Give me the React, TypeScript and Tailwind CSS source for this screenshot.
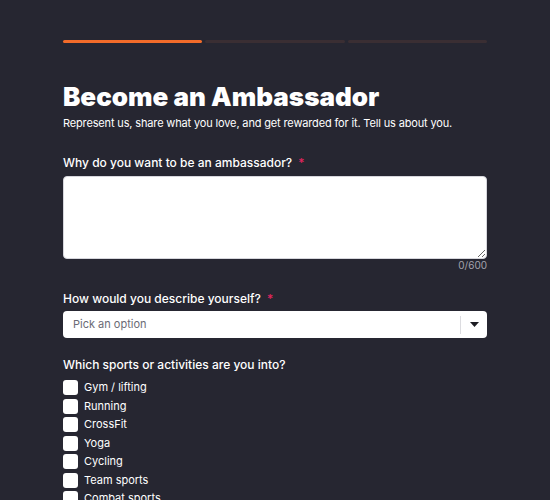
import React from "react";

const sports = [
  "Gym / lifting",
  "Running",
  "CrossFit",
  "Yoga",
  "Cycling",
  "Team sports",
  "Combat sports",
  "Swimming",
];

function Req() {
  return <span className="ml-[6px] text-[#e0245e] text-[12px]">*</span>;
}

export default function App() {
  return (
    <div className="min-h-screen bg-[#262631] font-['Inter',sans-serif] text-white">
      <div className="mx-auto w-[424px] pt-[40px] pb-10">
        <div className="flex gap-[3px] h-[3px]">
          <div className="flex-1 rounded-full bg-[#f26b2a]" />
          <div className="flex-1 rounded-full bg-[#3a2e33]" />
          <div className="flex-1 rounded-full bg-[#3a2e33]" />
        </div>

        <h1 className="mt-[38px] text-[26px] leading-[32px] font-black">
          Become an Ambassador
        </h1>
        <p className="mt-[2px] text-[11px] leading-[16px] tracking-[-0.15px] text-white">
          Represent us, share what you love, and get rewarded for it. Tell us about you.
        </p>

        <label className="mt-[24px] block text-[12px] leading-[16px] font-medium">
          Why do you want to be an ambassador?
          <Req />
        </label>
        <textarea
          className="mt-[5px] block h-[83px] w-full resize-y rounded-[4px] border border-[#d6d6dc] bg-white p-2 text-[12px] text-black outline-none"
        />
        <div className="text-right text-[10px] leading-[12px] text-[#a3a3ad]">0/600</div>

        <label className="mt-[20px] block text-[12px] leading-[16px] font-medium">
          How would you describe yourself?
          <Req />
        </label>
        <div className="mt-[4px] flex h-[27px] items-center rounded-[4px] bg-white">
          <span className="flex-1 pl-[10px] text-[11px] text-[#6b6b75]">Pick an option</span>
          <div className="h-[18px] w-px bg-[#dcdce0]" />
          <div className="flex w-[26px] items-center justify-center">
            <svg width="9" height="5" viewBox="0 0 9 5">
              <path d="M0 0 L9 0 L4.5 5 Z" fill="#1c1c22" />
            </svg>
          </div>
        </div>

        <label className="mt-[19px] block text-[12px] leading-[16px] font-medium">
          Which sports or activities are you into?
        </label>
        <div className="mt-[7px] flex flex-col gap-[3.5px]">
          {sports.map((s) => (
            <div key={s} className="flex h-[15px] items-center gap-[6px]">
              <div className="h-[15px] w-[15px] rounded-[3px] bg-white" />
              <span className="text-[11px] leading-[15px]">{s}</span>
            </div>
          ))}
        </div>
      </div>
    </div>
  );
}
